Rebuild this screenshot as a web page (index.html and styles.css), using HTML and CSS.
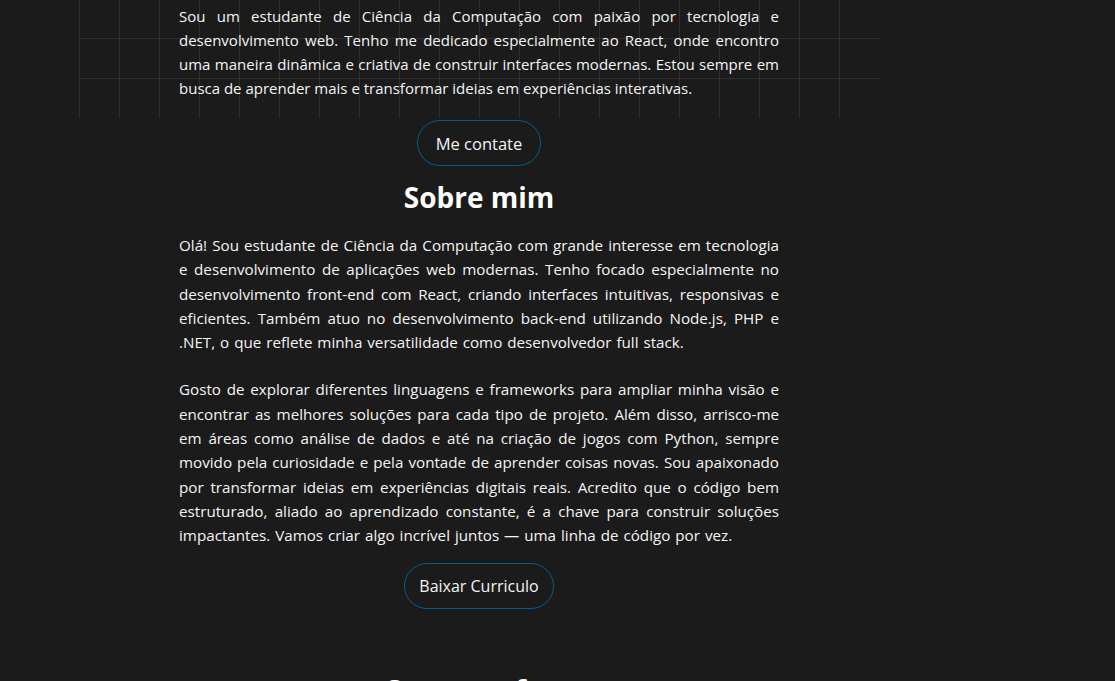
FILE: index.html
```html
<!DOCTYPE html>
<html lang="pt-BR">
<head>
<meta charset="utf-8">
<title>Portfólio</title>
<link rel="stylesheet" href="styles.css">
</head>
<body>
<main class="page">
  <section class="hero">
    <div class="grid"></div>
    <p class="text hero-text">Sou um estudante de Ciência da Computação com paixão por tecnologia e desenvolvimento web. Tenho me dedicado especialmente ao React, onde encontro uma maneira dinâmica e criativa de construir interfaces modernas. Estou sempre em busca de aprender mais e transformar ideias em experiências interativas.</p>
    <button class="btn btn-contact">Me contate</button>
  </section>
  <section class="about">
    <h2 class="title">Sobre mim</h2>
    <p class="text about-text">Olá! Sou estudante de Ciência da Computação com grande interesse em tecnologia e desenvolvimento de aplicações web modernas. Tenho focado especialmente no desenvolvimento front-end com React, criando interfaces intuitivas, responsivas e eficientes. Também atuo no desenvolvimento back-end utilizando Node.js, PHP e .NET, o que reflete minha versatilidade como desenvolvedor full stack.</p>
    <p class="text about-text text-gap">Gosto de explorar diferentes linguagens e frameworks para ampliar minha visão e encontrar as melhores soluções para cada tipo de projeto. Além disso, arrisco-me em áreas como análise de dados e até na criação de jogos com Python, sempre movido pela curiosidade e pela vontade de aprender coisas novas. Sou apaixonado por transformar ideias em experiências digitais reais. Acredito que o código bem estruturado, aliado ao aprendizado constante, é a chave para construir soluções impactantes. Vamos criar algo incrível juntos — uma linha de código por vez.</p>
    <button class="btn btn-cv">Baixar Curriculo</button>
  </section>
  <section class="next">
    <h2 class="title">O que eu faço</h2>
  </section>
</main>
</body>
</html>
```

FILE: styles.css
```css
html, body {
  margin: 0;
  padding: 0;
  background: #1b1b1b;
  height: 681px;
  overflow: hidden;
}

body {
  font-family: "Open Sans", "Noto Sans", sans-serif;
  color: #f4f4f4;
}

.page {
  width: 958px;
  display: flex;
  flex-direction: column;
  align-items: center;
}

.hero {
  position: relative;
  width: 800px;
  display: flex;
  flex-direction: column;
  align-items: center;
  padding-top: 4px;
}

.grid {
  position: absolute;
  left: 0;
  top: -2px;
  width: 800px;
  height: 120px;
  background-image:
    linear-gradient(to right, #2e2e2e 1px, transparent 1px),
    linear-gradient(to bottom, #2e2e2e 1px, transparent 1px);
  background-size: 40px 40px;
  z-index: 0;
}

.text {
  position: relative;
  z-index: 1;
  width: 600px;
  margin: 0;
  text-align: justify;
}

.hero-text {
  font-size: 15px;
  line-height: 24px;
}

.about-text {
  font-size: 15.2px;
  line-height: 24.3px;
  word-spacing: 1px;
}

.btn {
  height: 46px;
  padding: 0 13px;
  border: 1px solid #0c5a8c;
  border-radius: 23px;
  background: transparent;
  color: #f4f4f4;
  font-family: "Open Sans", "Noto Sans", sans-serif;
  font-size: 16.5px;
  white-space: nowrap;
  cursor: pointer;
}

.btn-contact {
  margin-top: 20px;
  width: 124px;
}

.about {
  display: flex;
  flex-direction: column;
  align-items: center;
}

.title {
  margin: 13px 0 18px;
  font-size: 28px;
  line-height: 36px;
  font-weight: 700;
  color: #ffffff;
}

.text-gap {
  margin-top: 23px;
}

.btn-cv {
  margin-top: 15px;
  width: 150px;
  font-size: 16px;
}

.next {
  display: flex;
  flex-direction: column;
  align-items: center;
  padding-top: 50px;
}
```
